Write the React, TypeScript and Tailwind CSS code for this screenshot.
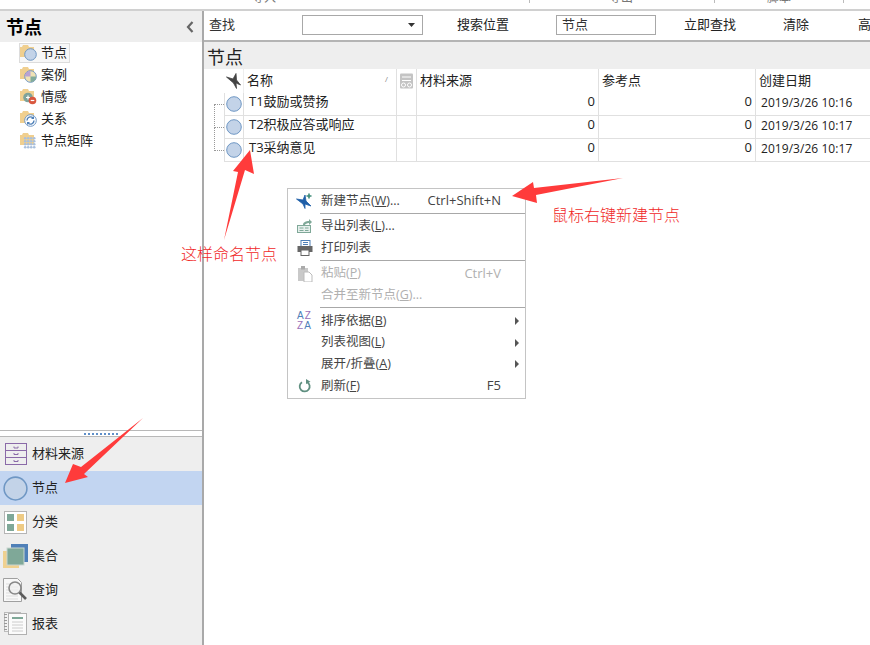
import React from 'react';

const FONT = '"Open Sans", "Noto Sans CJK SC", sans-serif';

const NodeCircle = ({ size = 16 }: { size?: number }) => (
  <svg width={size} height={size} viewBox="0 0 16 16">
    <circle cx="8" cy="8" r="7.3" fill="#c3d3e8" stroke="#6f97c4" strokeWidth="1" />
  </svg>
);

const FolderIcon = ({ children }: { children: React.ReactNode }) => (
  <svg width="17" height="18" viewBox="0 0 17 18">
    <path d="M0 3h2l1-2h5l1 2h5v10H0z" fill="#f0cf8f" />
    {children}
  </svg>
);

const treeItems: { label: string; icon: React.ReactNode }[] = [
  {
    label: '节点',
    icon: <circle cx="10.5" cy="10.5" r="5.8" fill="#c3d3e8" stroke="#6f97c4" />,
  },
  {
    label: '案例',
    icon: (
      <g>
        <circle cx="10.5" cy="10.5" r="5.8" fill="#f0e2b5" stroke="#6f97c4" />
        <path d="M10.500 4.700a5.800 5.800 0 0 0-5.800 5.800h5.800z" fill="#b9a2d3" />
        <path d="M10.500 10.500v5.800a5.800 5.800 0 0 0 5.800-5.800z" fill="#82ab9c" />
      </g>
    ),
  },
  {
    label: '情感',
    icon: (
      <g>
        <circle cx="8" cy="9.500" r="4.800" fill="#7fa39a" />
        <path d="M6 9.500h4M8 7.500v4" stroke="#fff" strokeWidth="1.200" />
        <circle cx="12.500" cy="12.500" r="3.800" fill="#d9573f" />
        <path d="M10.700 12.500h3.600" stroke="#fff" strokeWidth="1.200" />
      </g>
    ),
  },
  {
    label: '关系',
    icon: (
      <g fill="none">
        <circle cx="10.500" cy="10.500" r="5.800" fill="#fff" stroke="#6f97c4" />
        <path d="M7 10.500a3.500 3.500 0 0 1 6-2.500M14 10.500a3.500 3.500 0 0 1-6 2.500" stroke="#4f80b8" strokeWidth="1.400" />
        <path d="M14 6v3h-3zM7 15v-3h3z" fill="#4f80b8" />
      </g>
    ),
  },
  {
    label: '节点矩阵',
    icon: (
      <g fill="#a9c0dd">
        {[5, 8, 11, 14].map((y) =>
          [4, 7, 10, 13].map((x) => <circle key={`${x}-${y}`} cx={x + 1.2} cy={y + 1.2} r="1.300" />)
        )}
      </g>
    ),
  },
];

const DrawerIcon = () => (
  <svg width="24" height="24" viewBox="0 0 24 24" fill="none" stroke="#8a6aa8" strokeWidth="1">
    <rect x="2.500" y="1.500" width="21" height="21" />
    <path d="M2.500 8.500h21M2.500 15.500h21M11 4.500v1.500h4V4.500M11 11v1.500h4V11M11 18v1.500h4V18" />
  </svg>
);

const CategoryIcon = () => (
  <svg width="24" height="24" viewBox="0 0 24 24">
    <rect x="1.500" y="1.500" width="22" height="22" fill="#fff" stroke="#b5b5b5" />
    <rect x="4" y="4" width="7" height="7" fill="#7fa898" />
    <rect x="14" y="4" width="7" height="7" fill="#eecb85" />
    <rect x="4" y="14" width="7" height="7" fill="#7fa898" />
    <rect x="14" y="14" width="7" height="7" fill="#eecb85" />
  </svg>
);

const SetIcon = () => (
  <svg width="25" height="25" viewBox="0 0 25 25">
    <rect x="0" y="7" width="16" height="17" fill="#f0d190" />
    <rect x="8" y="0" width="17" height="18" fill="#4f80b8" />
    <rect x="4" y="4" width="17" height="17" fill="#7fa898" stroke="#c9d6d0" />
  </svg>
);

const QueryIcon = () => (
  <svg width="25" height="25" viewBox="0 0 25 25" fill="none">
    <path d="M0.500 0.500h14l4 4v19h-18z" fill="#f8f8f8" stroke="#a0a0a0" />
    <path d="M3 6h8M3 9h12M3 12h12M3 15h12M3 18h12M3 21h12" stroke="#ddd" />
    <circle cx="12" cy="10" r="6" fill="#f0f0f0" fillOpacity="0.700" stroke="#888" strokeWidth="1.600" />
    <path d="M16.500 14.500l6.500 6.500" stroke="#5c5c5c" strokeWidth="2.600" />
  </svg>
);

const ReportIcon = () => (
  <svg width="24" height="24" viewBox="0 0 24 24" fill="none" className="-mt-[2px]">
    <rect x="1.500" y="1.500" width="16" height="19" fill="#f2f2f2" stroke="#bbb" />
    <rect x="5.500" y="2.500" width="18" height="21" fill="#fbfbfb" stroke="#b0b0b0" />
    <path d="M9 7h11" stroke="#7fa898" strokeWidth="2" />
    <path d="M9 11h11M9 14h11M9 17h11M9 20h11" stroke="#ccc" />
    <path d="M2.500 3v17" stroke="#999" strokeDasharray="1 2" strokeWidth="3" />
  </svg>
);

const navItems: { label: string; icon: React.ReactNode; active?: boolean }[] = [
  { label: '材料来源', icon: <DrawerIcon /> },
  { label: '节点', icon: <NodeCircle size={25} />, active: true },
  { label: '分类', icon: <CategoryIcon /> },
  { label: '集合', icon: <SetIcon /> },
  { label: '查询', icon: <QueryIcon /> },
  { label: '报表', icon: <ReportIcon /> },
];

const rows = [
  { name: 'T1鼓励或赞扬', date: '2019/3/26 10:16' },
  { name: 'T2积极应答或响应', date: '2019/3/26 10:17' },
  { name: 'T3采纳意见', date: '2019/3/26 10:17' },
];

const COLS = 'grid grid-cols-[20px_19px_153px_20px_182px_157px_115px]';

const Caret = () => (
  <svg width="7" height="4" viewBox="0 0 7 4">
    <path d="M0 0h7L3.500 4z" fill="#333" />
  </svg>
);

const Acc = ({ k }: { k: string }) => (
  <>
    (<span className="underline">{k}</span>)
  </>
);

const MenuRow = ({
  icon,
  children,
  shortcut,
  sub,
  disabled,
  short,
}: {
  icon?: React.ReactNode;
  children: React.ReactNode;
  shortcut?: string;
  sub?: boolean;
  disabled?: boolean;
  short?: boolean;
}) => (
  <div className={`flex items-center text-[12.5px] ${short ? 'h-[21px]' : 'h-[22px]'} ${disabled ? 'text-[#b0b0b0]' : 'text-[#444]'}`}>
    <div className="w-[33px] flex justify-center shrink-0">{icon}</div>
    <div className="flex-1 whitespace-nowrap">{children}</div>
    {shortcut && <div className="pr-[24px] text-[13px] whitespace-nowrap">{shortcut}</div>}
    {sub && (
      <svg width="4" height="8" viewBox="0 0 4 8" className="mr-[6px]">
        <path d="M0 0l4 4-4 4z" fill="#555" />
      </svg>
    )}
  </div>
);

const MenuSep = ({ tight }: { tight?: boolean }) => (
  <div className={`ml-[32px] h-px mt-px bg-[#a8a8a8] ${tight ? 'mb-px' : 'mb-[2px]'}`} />
);

const ContextMenu = () => (
  <div className="absolute left-[287px] top-[188px] w-[239px] h-[211px] pt-px bg-white border border-[#c4c4c4]">
    <MenuRow
      shortcut="Ctrl+Shift+N"
      icon={
        <svg width="17" height="16" viewBox="0 0 17 16">
          <path d="M0.500 6l6.500 1 2-5 1 6 5 5-6-2v4.500l-2-4.500z" fill="#1f5fa8" stroke="#1f5fa8" strokeWidth="0.800" />
          <path d="M13 0.500v5M10.500 3h5" stroke="#3d8a78" strokeWidth="1.600" />
        </svg>
      }
    >
      新建节点<Acc k="W" />...
    </MenuRow>
    <MenuSep tight />
    <MenuRow
      icon={
        <svg width="16" height="16" viewBox="0 0 16 16" fill="none">
          <rect x="0.500" y="7.500" width="13" height="7" fill="#e6efec" stroke="#7fa898" />
          <path d="M2.500 10h4M8 10h3.500M2.500 12.500h4M8 12.500h3.500" stroke="#7fa898" />
          <path d="M6 7c0-3 3-4 6-4V1l3 3-3 3V5c-2 0-4 1-4 2z" fill="#7fa898" />
        </svg>
      }
    >
      导出列表<Acc k="L" />...
    </MenuRow>
    <MenuRow
      icon={
        <svg width="16" height="16" viewBox="0 0 16 16">
          <rect x="4" y="0.500" width="9" height="6" fill="#fff" stroke="#4f80b8" />
          <path d="M6 2.500h5M6 4.500h5" stroke="#4f80b8" />
          <rect x="0.500" y="6" width="15" height="6" fill="#666" />
          <rect x="4" y="10" width="8" height="5.500" fill="#fff" stroke="#666" />
        </svg>
      }
    >
      打印列表
    </MenuRow>
    <MenuSep />
    <MenuRow
      disabled
      short
      shortcut="Ctrl+V"
      icon={
        <svg width="16" height="16" viewBox="0 0 16 16">
          <rect x="1" y="2" width="10" height="13" fill="#c9c9c9" />
          <rect x="4" y="0" width="4" height="3.500" fill="#aaa" />
          <path d="M7 6h5l3 3v7H7z" fill="#fff" stroke="#bbb" />
        </svg>
      }
    >
      粘贴<Acc k="P" />
    </MenuRow>
    <MenuRow disabled>
      合并至新节点<Acc k="G" />...
    </MenuRow>
    <MenuSep />
    <MenuRow
      sub
      icon={
        <div className="flex flex-col text-[10px] leading-[10px] tracking-[1px] text-[#9a70b8] font-['Liberation_Sans']">
          <span>
            <span className="text-[#4f80b8]">A</span>Z
          </span>
          <span>
            Z<span className="text-[#4f80b8]">A</span>
          </span>
        </div>
      }
    >
      排序依据<Acc k="B" />
    </MenuRow>
    <MenuRow sub short>
      列表视图<Acc k="L" />
    </MenuRow>
    <MenuRow sub>
      展开/折叠<Acc k="A" />
    </MenuRow>
    <MenuRow
      shortcut="F5"
      icon={
        <svg width="14" height="14" viewBox="0 0 14 14" fill="none">
          <path d="M9 3a5 5 0 1 1-5 .2" stroke="#5f8f80" strokeWidth="1.800" />
          <path d="M8 0l4.500 2.800L8 5z" fill="#5f8f80" />
        </svg>
      }
    >
      刷新<Acc k="F" />
    </MenuRow>
  </div>
);

export default function App() {
  return (
    <div className="relative w-[870px] h-[645px] overflow-hidden bg-white text-[#222] flex flex-col" style={{ fontFamily: FONT }}>
      {/* clipped ribbon labels */}
      <div className="h-[11px] shrink-0 border-b-2 border-[#d0d0d0] flex items-end overflow-hidden text-[12px] leading-[14px] text-[#777]">
        <span className="ml-[252px] mb-[4px] whitespace-nowrap">导入</span>
        <span className="ml-[253px] mb-0 w-px h-[3px] self-start bg-[#bbb]" />
        <span className="ml-[79px] mb-[4px] whitespace-nowrap">导出</span>
        <span className="ml-[81px] w-px h-[3px] self-start bg-[#bbb]" />
        <span className="ml-[52px] mb-[4px] whitespace-nowrap">脚本</span>
        <span className="ml-[52px] w-px h-[3px] self-start bg-[#bbb]" />
      </div>

      <div className="flex-1 flex min-h-0">
        {/* left panel */}
        <div className="w-[202px] shrink-0 flex flex-col">
          <div className="h-[31px] shrink-0 bg-[#eeeeee] flex items-center justify-between pl-[6px] pr-[8px] pt-px">
            <span className="text-[18px] font-bold text-black">节点</span>
            <svg width="8" height="12" viewBox="0 0 8 12" fill="none">
              <path d="M6.500 1L2 6l4.500 5" stroke="#666" strokeWidth="2.200" />
            </svg>
          </div>
          <div className="flex-1">
            {treeItems.map((item, i) => (
              <div key={item.label} className="flex items-center h-[22px] pl-[19px]">
                <div
                  className={`flex items-center h-[20px] pr-[2px] border ${
                    i === 0 ? 'border-[#dcdcdc] bg-[#f7f7f7]' : 'border-transparent'
                  }`}
                >
                  <FolderIcon>{item.icon}</FolderIcon>
                  <span className="ml-[4px] text-[13px] text-[#222]">{item.label}</span>
                </div>
              </div>
            ))}
          </div>
          {/* splitter */}
          <div className="h-[7px] shrink-0 border-y border-[#b8b8b8] flex items-center justify-center">
            <div className="w-[34px] h-[2px] border-t-2 border-dotted border-[#5f8fc8]" />
          </div>
          <div className="bg-[#eeeeee] h-[208px] shrink-0">
            {navItems.map((item) => (
              <div
                key={item.label}
                className={`h-[34px] flex items-center pl-[2px] ${item.active ? 'bg-[#c2d5f1]' : ''}`}
              >
                <div className="w-[26px] flex justify-center shrink-0">{item.icon}</div>
                <span className="ml-[4px] text-[13px] text-[#222]">{item.label}</span>
              </div>
            ))}
          </div>
        </div>

        {/* divider */}
        <div className="w-[2px] bg-[#a9a9a9] shrink-0" />

        {/* right panel */}
        <div className="flex-1 min-w-0 flex flex-col">
          <div className="h-[31px] shrink-0 border-b-2 border-[#b4b4b4] flex items-center pl-[5px] pb-[2px] text-[13px] whitespace-nowrap overflow-hidden">
            <span className="w-[93px] shrink-0 text-[#333]">查找</span>
            <div className="w-[121px] h-[20px] shrink-0 border border-[#a8a8a8] flex items-center justify-end pr-[7px]">
              <Caret />
            </div>
            <span className="ml-[34px] w-[83px] shrink-0">搜索位置</span>
            <Caret />
            <div className="ml-[16px] w-[100px] h-[20px] shrink-0 border border-[#a8a8a8] flex items-center pl-[5px] text-[#333]">
              节点
            </div>
            <span className="ml-[28px] w-[99px] shrink-0">立即查找</span>
            <span className="w-[75px] shrink-0">清除</span>
            <span>高级查找</span>
          </div>

          <div className="h-[27px] shrink-0 bg-[#eeeeee] flex items-center pl-[3px] pt-[2px] text-[18px] text-[#222] leading-none">
            节点
          </div>

          {/* table */}
          <div className="text-[13px] text-[#222]">
            <div className={`${COLS} h-[24px]`}>
              <div />
              <div className="flex items-center justify-center">
                <svg width="15" height="16" viewBox="0 0 15 16">
                  <path d="M0.500 4l6.500 2 3-5.500 .5 6.500 4 5-4.500-2 .5 5.500-3-5.500z" fill="#444" stroke="#444" strokeWidth="0.800" />
                </svg>
              </div>
              <div className="relative flex items-center pl-[3px] border-l border-[#eeeeee]">
                名称
                <span className="absolute right-[8px] top-[4px] text-[8px] text-[#888]">/</span>
              </div>
              <div className="flex items-center justify-center border-l border-[#e0e0e0]">
                <svg width="15" height="16" viewBox="0 0 15 16" fill="none">
                  <rect x="1" y="0.500" width="13" height="15" rx="1" fill="#c4c4c4" />
                  <path d="M3 4h9M3 7.500h9" stroke="#fff" />
                  <rect x="2.500" y="10" width="4" height="4" rx="2" stroke="#fff" />
                  <rect x="8.500" y="10" width="4" height="4" rx="2" stroke="#fff" />
                </svg>
              </div>
              <div className="flex items-center pl-[3px] border-l border-[#e0e0e0]">材料来源</div>
              <div className="flex items-center pl-[3px] border-l border-[#e0e0e0]">参考点</div>
              <div className="flex items-center pl-[3px] border-l border-[#e0e0e0]">创建日期</div>
            </div>
            {rows.map((r, i) => (
              <div key={r.name} className={`${COLS} h-[23px] leading-[14px]`}>
                <div className="relative">
                  <div
                    className={`absolute left-[10px] w-[10px] border-b border-dotted border-[#999] ${
                      i === 0 ? 'top-[11px] h-px' : '-top-[11px] h-[23px] border-l'
                    }`}
                  />
                </div>
                <div className="flex items-center justify-center border-l border-b border-[#e0e0e0]">
                  <NodeCircle />
                </div>
                <div className="flex items-center pl-[5px] pb-[7px] border-l border-b border-[#e0e0e0] whitespace-nowrap">{r.name}</div>
                <div className="border-l border-b border-[#e0e0e0]" />
                <div className="flex items-center justify-end pr-[3px] pb-[7px] border-l border-b border-[#e0e0e0]">0</div>
                <div className="flex items-center justify-end pr-[3px] pb-[7px] border-l border-b border-[#e0e0e0]">0</div>
                <div className="flex items-center pl-[5px] pb-[3px] border-l border-b border-[#e0e0e0] text-[12px] tracking-[0.05px] whitespace-nowrap">{r.date}</div>
              </div>
            ))}
          </div>
        </div>
      </div>

      <ContextMenu />

      {/* annotations */}
      <svg className="absolute inset-0 pointer-events-none" width="870" height="645" viewBox="0 0 870 645">
        <polygon points="65,483 73,464 81,467 143,418 84,474 88,477" fill="#ff3b3b" />
        <polygon points="250,150 254,174 245,170 224,240 238,172 233,171" fill="#ff3b3b" />
        <polygon points="512,196 533,182 534,188 623,178 536,195 537,203" fill="#ff3b3b" />
      </svg>
      <span className="absolute left-[181px] top-[243px] text-[16px] leading-[22px] font-light text-[#f02828] whitespace-nowrap">这样命名节点</span>
      <span className="absolute left-[552px] top-[204px] text-[16px] leading-[22px] font-light text-[#f02828] whitespace-nowrap">鼠标右键新建节点</span>
    </div>
  );
}
